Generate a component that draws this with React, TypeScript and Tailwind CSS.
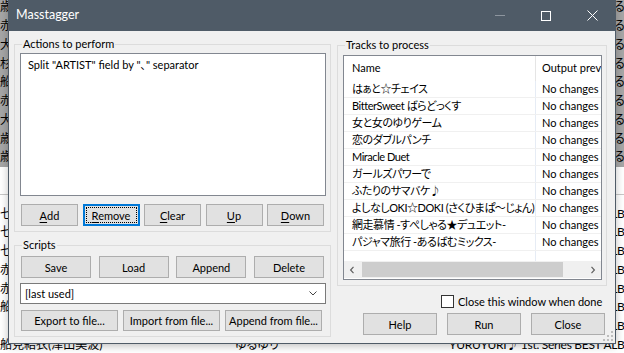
import React from "react";

const BG_ROWS: { a: string; b: string; c: string; sel?: boolean; upper?: boolean; line?: boolean }[] = [
  { a: "歳納京子(大坪由佳)", b: "ゆるゆり", c: "", sel: true, upper: true },
  { a: "赤座あかり(三上枝織)", b: "ゆるゆり", c: "", sel: true, upper: true },
  { a: "大室櫻子(加藤英美里)", b: "ゆるゆり", c: "", sel: true, upper: true },
  { a: "杉浦綾乃(藤田咲)", b: "ゆるゆり", c: "", sel: true, upper: true },
  { a: "船見結衣(津田美波)", b: "ゆるゆり", c: "", sel: true, upper: true },
  { a: "赤座あかり(三上枝織)", b: "ゆるゆり", c: "", sel: true, upper: true },
  { a: "大室櫻子(加藤英美里)", b: "ゆるゆり", c: "", sel: true, upper: true },
  { a: "歳納京子(大坪由佳)", b: "ゆるゆり", c: "", sel: true, upper: true },
  { a: "歳納京子(大坪由佳)", b: "ゆるゆり", c: "", sel: true, upper: true },
  { a: "", b: "", c: "" },
  { a: "", b: "", c: "", line: true },
  { a: "七森中☆ごらく部", b: "ゆるゆり", c: "YURUYURI♪ 1st. Series BEST ALBUM" },
  { a: "七森中☆ごらく部", b: "ゆるゆり", c: "YURUYURI♪ 1st. Series BEST ALBUM" },
  { a: "七森中☆ごらく部", b: "ゆるゆり", c: "YURUYURI♪ 1st. Series BEST ALBUM" },
  { a: "赤座あかり(三上枝織)", b: "ゆるゆり", c: "YURUYURI♪ 1st. Series BEST ALBUM" },
  { a: "赤座あかり(三上枝織)", b: "ゆるゆり", c: "YURUYURI♪ 1st. Series BEST ALBUM" },
  { a: "船見結衣(津田美波)", b: "ゆるゆり", c: "YURUYURI♪ 1st. Series BEST ALBUM" },
  { a: "", b: "ゆるゆり", c: "YURUYURI♪ 1st. Series BEST ALBUM" },
  { a: "船見結衣(津田美波)", b: "ゆるゆり", c: "YURUYURI♪ 1st. Series BEST ALBUM" },
];

const TRACKS = [
  "はぁと☆チェイス",
  "BitterSweet ばらどっくす",
  "女と女のゆりゲーム",
  "恋のダブルパンチ",
  "Miracle Duet",
  "ガールズパワーで",
  "ふたりのサマバケ♪",
  "よしなしOKI☆DOKI (さくひまぱ～じょん)",
  "網走慕情 -すぺしゃる★デュエット-",
  "パジャマ旅行 -あるばむミックス-",
];

function Btn({ className = "", children }: { className?: string; children: React.ReactNode }) {
  return (
    <div
      className={
        "flex items-center justify-center bg-[#e1e1e1] border border-[#adadad] text-black leading-none " + className
      }
    >
      {children}
    </div>
  );
}

function Key({ children }: { children: React.ReactNode }) {
  return <span className="underline decoration-1 underline-offset-[2px]">{children}</span>;
}

function Group({ label, className = "", children }: { label: string; className?: string; children: React.ReactNode }) {
  return (
    <div className={"relative border border-[#dcdcdc] " + className}>
      <span className="absolute left-[7px] top-[-8px] px-[1px] bg-[#f0f0f0] leading-[14px] whitespace-nowrap">
        {label}
      </span>
      {children}
    </div>
  );
}

function ChevronLeft() {
  return (
    <svg width="7" height="8" viewBox="0 0 7 8">
      <path d="M4.5 0.8 L1.6 4 L4.5 7.2" fill="none" stroke="#606060" strokeWidth="1.2" />
    </svg>
  );
}
function ChevronRight() {
  return (
    <svg width="7" height="8" viewBox="0 0 7 8">
      <path d="M2.5 0.8 L5.4 4 L2.5 7.2" fill="none" stroke="#606060" strokeWidth="1.2" />
    </svg>
  );
}

export default function App() {
  return (
    <div className="relative w-[624px] h-[353px] overflow-hidden bg-white font-['Lato','Noto_Sans_CJK_JP',sans-serif] text-black [font-feature-settings:'palt']">
      {/* background playlist */}
      <div className="flex flex-col mt-[-2px] text-[12px] w-[624px]">
        {BG_ROWS.map((r, i) =>
          r.line ? (
            <div key={i} className="h-[18.75px] flex items-center">
              <div className="w-full h-px bg-[#c8c8c8]" />
            </div>
          ) : (
            <div
              key={i}
              className={
                "grid grid-cols-[235px_214px_175px] h-[18.75px] items-center whitespace-nowrap overflow-hidden " +
                (r.sel ? "bg-[#a6a6a6]" : "bg-white")
              }
            >
              <div className="overflow-hidden">{r.a}</div>
              <div className="overflow-hidden">{r.b}</div>
              {r.upper ? (
                <div className="flex overflow-hidden">
                  <span className="inline-block w-[165px] shrink-0 overflow-hidden">ゆるゆり♪♪ OST</span>
                  <span>るゆり</span>
                </div>
              ) : (
                <div className="overflow-hidden tracking-[-0.3px]">{r.c}</div>
              )}
            </div>
          )
        )}
      </div>

      {/* dialog window */}
      <div className="absolute left-[8px] top-0 w-[608px] h-[344px] flex flex-col bg-[#f0f0f0] border-x border-b border-[#4f5b67] shadow-[0_2px_8px_rgba(0,0,0,0.25)] text-[11px]">
        {/* title bar */}
        <div className="h-[31px] shrink-0 flex items-center bg-[#4f5b67] text-white">
          <div className="pl-[7px] text-[12.5px] leading-none flex-1">Masstagger</div>
          <div className="w-[46px] h-full flex items-center justify-center">
            <div className="w-[10px] h-px bg-[#8d959e]" />
          </div>
          <div className="w-[46px] h-full flex items-center justify-center">
            <div className="w-[10px] h-[10px] border border-white" />
          </div>
          <div className="w-[46px] h-full flex items-center justify-center">
            <svg width="11" height="11" viewBox="0 0 11 11">
              <path d="M0.5 0.5 L10.5 10.5 M10.5 0.5 L0.5 10.5" stroke="white" strokeWidth="1" />
            </svg>
          </div>
        </div>

        {/* body */}
        <div className="flex flex-row">
          {/* left column */}
          <div className="ml-[5px] w-[317px] flex flex-col">
            <Group label="Actions to perform" className="mt-[13px] h-[188px] pt-[8px] pl-[5px]">
              <div className="w-[306px] h-[143px] border border-[#828790] bg-white pl-[7px] pt-[4px] leading-[14px] whitespace-nowrap">
                Split "ARTIST" field by "、" separator
              </div>
              <div className="mt-[8px] ml-[1px] w-[303px] flex justify-between">
                <Btn className="w-[57px] h-[22px]">
                  <Key>A</Key>dd
                </Btn>
                <div className="relative w-[57px] h-[22px] flex items-center justify-center bg-[#e1e1e1] border-2 border-[#0078d7] leading-none">
                  <div className="absolute inset-[1px] border border-dotted border-black" />
                  <span>
                    <Key>R</Key>emove
                  </span>
                </div>
                <Btn className="w-[57px] h-[22px]">
                  <Key>C</Key>lear
                </Btn>
                <Btn className="w-[57px] h-[22px]">
                  <Key>U</Key>p
                </Btn>
                <Btn className="w-[57px] h-[22px]">
                  <Key>D</Key>own
                </Btn>
              </div>
            </Group>

            <Group label="Scripts" className="mt-[13px] h-[92px] pt-[10px] pl-[5px]">
              <div className="ml-[1px] w-[303px] flex justify-between">
                <Btn className="w-[70px] h-[22px]">Save</Btn>
                <Btn className="w-[70px] h-[22px]">Load</Btn>
                <Btn className="w-[70px] h-[22px]">Append</Btn>
                <Btn className="w-[70px] h-[22px]">Delete</Btn>
              </div>
              <div className="mt-[5px] w-[306px] h-[21px] border border-[#7a7a7a] bg-white flex items-center pl-[4px] pr-[8px]">
                <span className="flex-1 leading-none">[last used]</span>
                <svg width="8" height="5" viewBox="0 0 8 5">
                  <path d="M0.5 0.5 L4 4 L7.5 0.5" fill="none" stroke="#444" strokeWidth="1" />
                </svg>
              </div>
              <div className="mt-[6px] ml-[1px] flex gap-[5px]">
                <Btn className="w-[97px] h-[21px]">Export to file...</Btn>
                <Btn className="w-[97px] h-[21px]">Import from file...</Btn>
                <Btn className="w-[97px] h-[21px]">Append from file...</Btn>
              </div>
            </Group>
          </div>

          {/* right column */}
          <div className="ml-[6px] w-[270px] flex flex-col">
            <Group label="Tracks to process" className="mt-[14px] h-[241px] pt-[9px] pl-[5px]">
              <div className="w-[259px] h-[225px] border border-[#828790] bg-white flex flex-col overflow-hidden whitespace-nowrap">
                <div className="h-[25px] shrink-0 flex">
                  <div className="w-[192px] shrink-0 pl-[8px] flex items-center border-r border-[#e5e5e5]">Name</div>
                  <div className="pl-[6px] flex items-center">Output preview</div>
                </div>
                {TRACKS.map((t, i) => (
                  <div key={i} className="h-[17px] shrink-0 flex border-b border-[#f0f0f0]">
                    <div className="w-[192px] shrink-0 pl-[8px] flex items-center border-r border-[#e6ecf5] overflow-hidden tracking-[-0.45px]">
                      {t}
                    </div>
                    <div className="pl-[6px] flex items-center">No changes</div>
                  </div>
                ))}
                <div className="flex-1 flex">
                  <div className="w-[192px] shrink-0 border-r border-[#e6ecf5]" />
                </div>
                <div className="h-[17px] shrink-0 mb-[1px] flex bg-[#f0f0f0]">
                  <div className="w-[17px] flex items-center justify-center">
                    <ChevronLeft />
                  </div>
                  <div className="flex-1 flex items-center">
                    <div className="ml-[1px] w-[201px] h-[15px] bg-[#cdcdcd]" />
                  </div>
                  <div className="w-[17px] flex items-center justify-center">
                    <ChevronRight />
                  </div>
                </div>
              </div>
            </Group>

            <div className="mt-[8px] h-[14px] flex items-center">
              <div className="ml-[104px] w-[13px] h-[13px] border border-[#333] bg-white" />
              <span className="ml-[4px] leading-none whitespace-nowrap">Close this window when done</span>
            </div>

            <div className="mt-[5px] ml-[26px] flex gap-[10px]">
              <Btn className="w-[74px] h-[22px]">Help</Btn>
              <Btn className="w-[74px] h-[22px]">Run</Btn>
              <Btn className="w-[74px] h-[22px]">Close</Btn>
            </div>
          </div>
        </div>

        {/* size grip */}
        <svg className="absolute right-[2px] bottom-[2px]" width="10" height="10" viewBox="0 0 10 10">
          <rect x="8" y="0" width="2" height="2" fill="#bdbdbd" />
          <rect x="4" y="4" width="2" height="2" fill="#bdbdbd" />
          <rect x="8" y="4" width="2" height="2" fill="#bdbdbd" />
          <rect x="0" y="8" width="2" height="2" fill="#bdbdbd" />
          <rect x="4" y="8" width="2" height="2" fill="#bdbdbd" />
          <rect x="8" y="8" width="2" height="2" fill="#bdbdbd" />
        </svg>
      </div>
    </div>
  );
}
